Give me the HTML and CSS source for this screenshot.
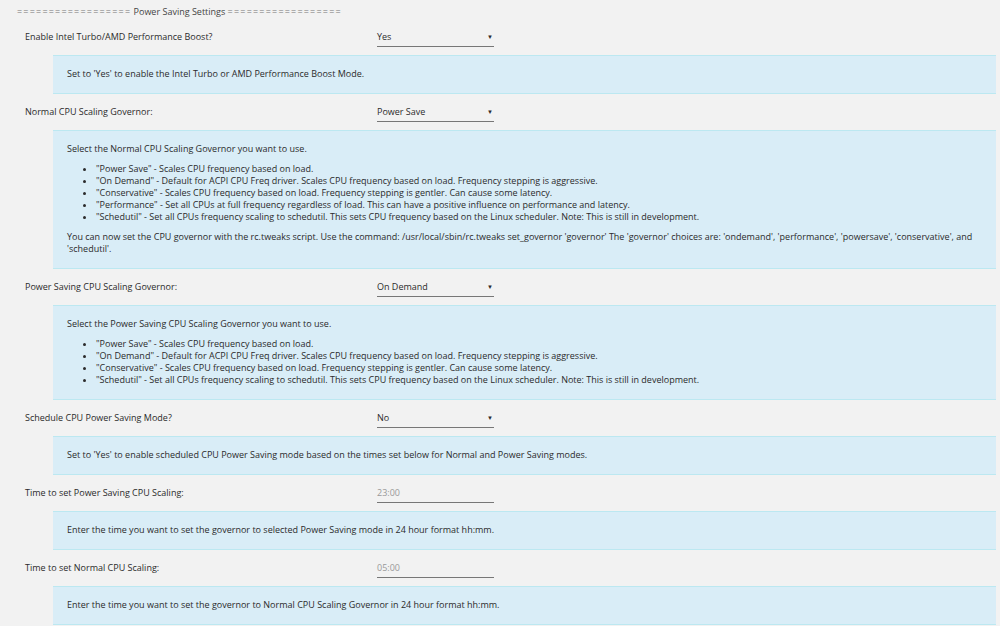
FILE: index.html
```html
<!DOCTYPE html>
<html lang="en">
<head>
    <meta charset="UTF-8">
    <title>Power Saving Settings</title>
    <link rel="stylesheet" href="styles.css">
</head>
<body>
    <div class="title"><span class="rule">==================</span> Power Saving Settings <span class="rule">==================</span></div>

    <div class="row">
        <label class="name">Enable Intel Turbo/AMD Performance Boost?</label>
        <div class="select">Yes<span class="arrow">&#9660;</span></div>
    </div>
    <div class="help">
        <p>Set to 'Yes' to enable the Intel Turbo or AMD Performance Boost Mode.</p>
    </div>

    <div class="row">
        <label class="name">Normal CPU Scaling Governor:</label>
        <div class="select">Power Save<span class="arrow">&#9660;</span></div>
    </div>
    <div class="help">
        <p>Select the Normal CPU Scaling Governor you want to use.</p>
        <ul>
            <li>"Power Save" - Scales CPU frequency based on load.</li>
            <li>"On Demand" - Default for ACPI CPU Freq driver. Scales CPU frequency based on load. Frequency stepping is aggressive.</li>
            <li>"Conservative" - Scales CPU frequency based on load. Frequency stepping is gentler. Can cause some latency.</li>
            <li>"Performance" - Set all CPUs at full frequency regardless of load. This can have a positive influence on performance and latency.</li>
            <li>"Schedutil" - Set all CPUs frequency scaling to schedutil. This sets CPU frequency based on the Linux scheduler. Note: This is still in development.</li>
        </ul>
        <p>You can now set the CPU governor with the rc.tweaks script. Use the command: /usr/local/sbin/rc.tweaks set_governor 'governor' The 'governor' choices are: 'ondemand', 'performance', 'powersave', 'conservative', and 'schedutil'.</p>
    </div>

    <div class="row">
        <label class="name">Power Saving CPU Scaling Governor:</label>
        <div class="select">On Demand<span class="arrow">&#9660;</span></div>
    </div>
    <div class="help">
        <p>Select the Power Saving CPU Scaling Governor you want to use.</p>
        <ul>
            <li>"Power Save" - Scales CPU frequency based on load.</li>
            <li>"On Demand" - Default for ACPI CPU Freq driver. Scales CPU frequency based on load. Frequency stepping is aggressive.</li>
            <li>"Conservative" - Scales CPU frequency based on load. Frequency stepping is gentler. Can cause some latency.</li>
            <li>"Schedutil" - Set all CPUs frequency scaling to schedutil. This sets CPU frequency based on the Linux scheduler. Note: This is still in development.</li>
        </ul>
    </div>

    <div class="row">
        <label class="name">Schedule CPU Power Saving Mode?</label>
        <div class="select">No<span class="arrow">&#9660;</span></div>
    </div>
    <div class="help">
        <p>Set to 'Yes' to enable scheduled CPU Power Saving mode based on the times set below for Normal and Power Saving modes.</p>
    </div>

    <div class="row">
        <label class="name">Time to set Power Saving CPU Scaling:</label>
        <div class="select time">23:00</div>
    </div>
    <div class="help">
        <p>Enter the time you want to set the governor to selected Power Saving mode in 24 hour format hh:mm.</p>
    </div>

    <div class="row">
        <label class="name">Time to set Normal CPU Scaling:</label>
        <div class="select time">05:00</div>
    </div>
    <div class="help">
        <p>Enter the time you want to set the governor to Normal CPU Scaling Governor in 24 hour format hh:mm.</p>
    </div>
</body>
</html>
```

FILE: styles.css
```css
body {
    margin: 0;
    background-color: #f2f2f2;
    color: #2b2b2b;
    font-family: "Open Sans", sans-serif;
    font-size: 9px;
    line-height: 12px;
}
.title {
    padding: 6px 0 1px 17px;
    color: #444;
}
.title .rule {
    color: #777;
    letter-spacing: 1.2px;
}
.row {
    display: flex;
    align-items: center;
    height: 36px;
    padding-left: 25px;
}
.name {
    width: 352px;
}
.select {
    display: flex;
    justify-content: space-between;
    align-items: center;
    width: 117px;
    height: 18px;
    border-bottom: 1px solid #777;
}
.select .arrow {
    font-size: 6px;
    padding-right: 1px;
}
.select.time {
    color: #999;
}
.help {
    margin: 0 4px 0 53px;
    padding: 12px 14px 13px;
    background-color: #d9edf7;
    border-top: 1px solid #bce8f1;
    border-bottom: 1px solid #bce8f1;
}
.help p {
    margin: 0;
}
.help ul {
    margin: 8px 0;
    padding-left: 29px;
}
.help ul:last-child {
    margin-bottom: 0;
}
```
